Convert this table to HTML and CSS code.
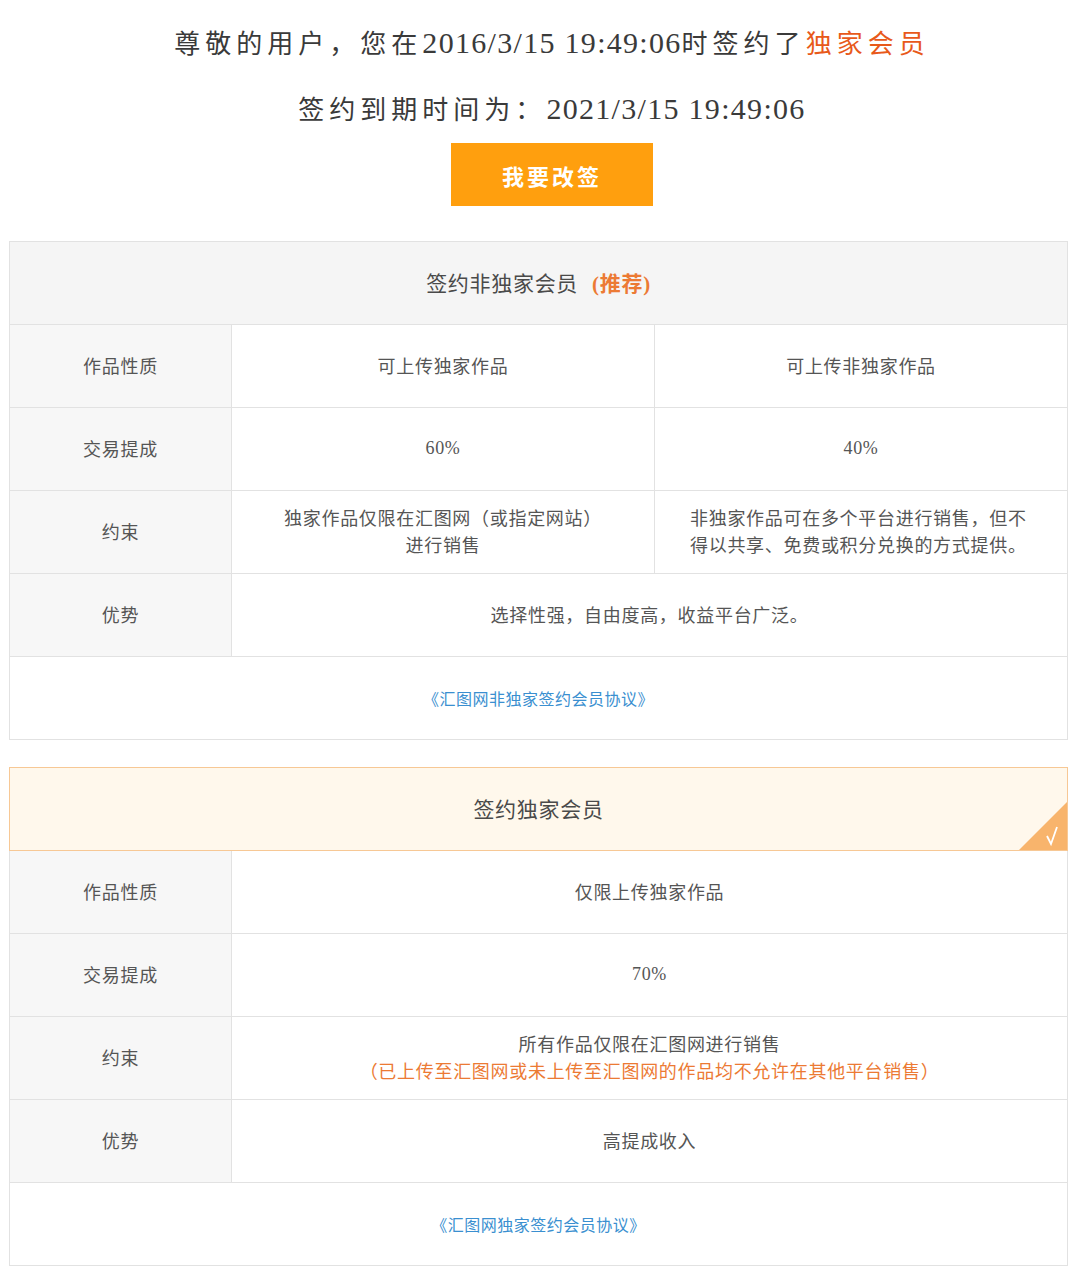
FILE: index.html
```html
<!DOCTYPE html>
<html lang="zh-CN">
<head>
    <meta charset="UTF-8">
    <title>签约会员</title>
    <link rel="stylesheet" href="styles.css">
</head>
<body>
    <div class="intro">
        <p class="line line-one"><span class="cn">尊敬的用户，您在</span><span class="num">2016/3/15 19:49:06</span><span class="cn">时签约了</span><span class="cn hot">独家会员</span></p>
        <p class="line line-two"><span class="cn">签约到期时间为：</span><span class="num">2021/3/15 19:49:06</span></p>
        <button class="change-button">我要改签</button>
    </div>

    <table class="plan">
        <colgroup>
            <col class="col-label">
            <col class="col-a">
            <col class="col-b">
        </colgroup>
        <tr>
            <th colspan="3" class="plan-head">签约非独家会员<span class="tag">(推荐)</span></th>
        </tr>
        <tr>
            <td class="label">作品性质</td>
            <td>可上传独家作品</td>
            <td>可上传非独家作品</td>
        </tr>
        <tr>
            <td class="label">交易提成</td>
            <td class="pct">60%</td>
            <td class="pct">40%</td>
        </tr>
        <tr>
            <td class="label">约束</td>
            <td class="multi">独家作品仅限在汇图网（或指定网站）<br>进行销售</td>
            <td class="multi left">非独家作品可在多个平台进行销售，但不<br>得以共享、免费或积分兑换的方式提供。</td>
        </tr>
        <tr>
            <td class="label">优势</td>
            <td colspan="2">选择性强，自由度高，收益平台广泛。</td>
        </tr>
        <tr>
            <td colspan="3" class="link-cell"><a href="#">《汇图网非独家签约会员协议》</a></td>
        </tr>
    </table>

    <table class="plan plan-active">
        <colgroup>
            <col class="col-label">
            <col class="col-a">
            <col class="col-b">
        </colgroup>
        <tr>
            <th colspan="3" class="plan-head">
                签约独家会员
                <span class="corner">
                    <svg width="48" height="48" viewBox="0 0 48 48">
                        <polygon points="48,0 48,48 0,48" fill="#f8b46c"/>
                        <path d="M28 34 L32 42 L38 25" fill="none" stroke="#fff" stroke-width="1.8"/>
                    </svg>
                </span>
            </th>
        </tr>
        <tr>
            <td class="label">作品性质</td>
            <td colspan="2">仅限上传独家作品</td>
        </tr>
        <tr>
            <td class="label">交易提成</td>
            <td colspan="2" class="pct">70%</td>
        </tr>
        <tr>
            <td class="label">约束</td>
            <td colspan="2" class="multi">所有作品仅限在汇图网进行销售<br><span class="warn">（已上传至汇图网或未上传至汇图网的作品均不允许在其他平台销售）</span></td>
        </tr>
        <tr>
            <td class="label">优势</td>
            <td colspan="2">高提成收入</td>
        </tr>
        <tr>
            <td colspan="3" class="link-cell"><a href="#">《汇图网独家签约会员协议》</a></td>
        </tr>
    </table>
</body>
</html>
```

FILE: styles.css
```css
body {
    margin: 0;
    padding: 0 12px 0 9px;
    background-color: #fff;
    color: #444;
    font-family: "Liberation Serif", "Noto Sans CJK SC", serif;
}
.intro {
    text-align: center;
    padding: 20px 0 0 27px;
}
.line {
    margin: 0;
    color: #3a3a3a;
    white-space: nowrap;
}
.line-one {
    height: 44px;
    line-height: 44px;
}
.line-two {
    margin-top: 22px;
    height: 44px;
    line-height: 44px;
}
.cn {
    font-family: "Noto Sans CJK SC", sans-serif;
    font-size: 26px;
    letter-spacing: 5px;
}
.num {
    font-size: 30px;
    letter-spacing: 1.3px;
}
.hot {
    color: #e8591a;
}
.change-button {
    display: block;
    margin: 13px auto 0;
    width: 202px;
    height: 63px;
    border: none;
    background-color: #ff9f0e;
    color: #fff;
    font-family: "Noto Sans CJK SC", sans-serif;
    font-size: 22px;
    font-weight: bold;
    letter-spacing: 3px;
    cursor: pointer;
}
.plan {
    width: 1059px;
    border-collapse: collapse;
    table-layout: fixed;
    margin-top: 35px;
    font-family: "Noto Sans CJK SC", serif;
    font-size: 18px;
    letter-spacing: 0.7px;
    color: #555;
}
.plan + .plan {
    margin-top: 27px;
}
.col-label {
    width: 222px;
}
.col-a {
    width: 423px;
}
.plan td,
.plan th {
    border: 1px solid #e2e2e2;
    height: 80px;
    padding: 0 0 2px;
    text-align: center;
    vertical-align: middle;
    font-weight: normal;
}
.plan-head {
    background-color: #f5f5f5;
    font-size: 21px;
    color: #4a4a4a;
    position: relative;
}
.tag {
    color: #ec7a34;
    margin-left: 14px;
    font-family: "Liberation Serif", "Noto Sans CJK SC", serif;
    font-weight: bold;
}
.label {
    background-color: #f7f7f7;
}
.pct {
    font-family: "Liberation Serif", serif;
}
.multi {
    line-height: 27px;
}
.multi.left {
    text-align: left;
    padding-left: 35px;
}
.warn {
    color: #ec7a34;
}
.link-cell a {
    color: #3a8fd0;
    text-decoration: none;
    font-family: "Noto Sans CJK SC", sans-serif;
    font-size: 16px;
    letter-spacing: 0.5px;
}
.link-cell {
    padding-bottom: 4px;
}
.plan-active .plan-head {
    background-color: #fff8ec;
    border: 1px solid #f7c895;
}
.corner {
    position: absolute;
    right: 0;
    bottom: 0;
    width: 48px;
    height: 48px;
    line-height: 0;
}
```
